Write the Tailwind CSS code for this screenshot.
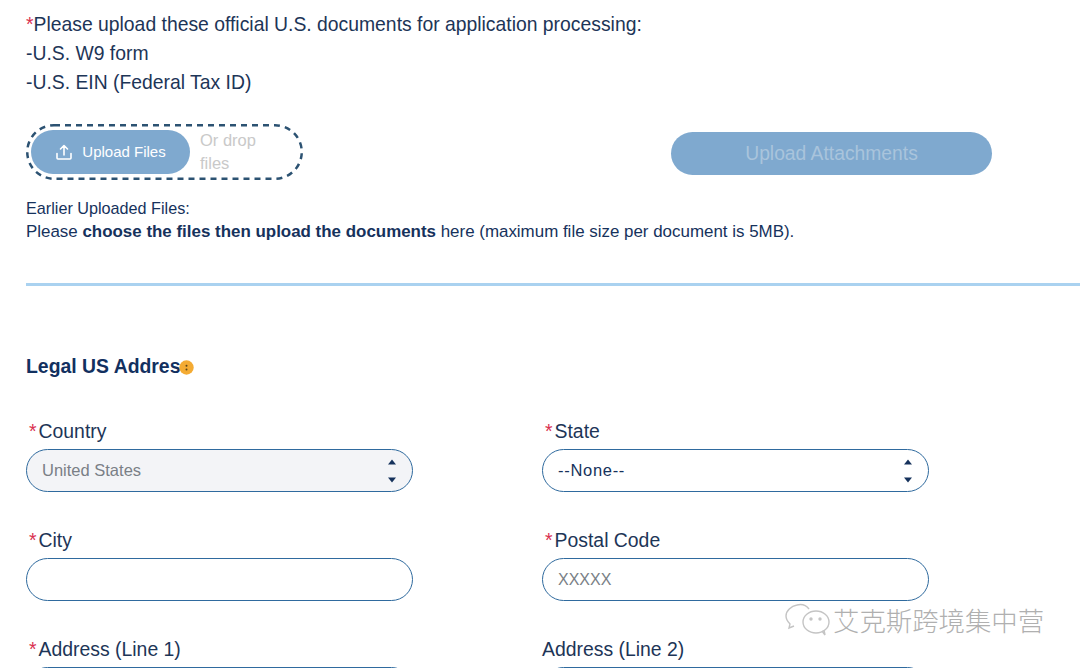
<!DOCTYPE html>
<html>
<head>
<meta charset="utf-8">
<script src="https://cdn.jsdelivr.net/npm/@tailwindcss/browser@4"></script>
</head>
<body class="bg-white">
<div class="relative h-[668px] w-[1080px] overflow-hidden bg-white font-['Liberation_Sans',Arial,sans-serif] text-[#16325c]">
  <div class="pl-[26px] pt-[10px]">
    <div class="text-[19.35px] leading-[29px] text-[#1d3557]">
      <p><span class="text-[#d9304f]">*</span>Please upload these official U.S. documents for application processing:</p>
      <p>-U.S. W9 form</p>
      <p>-U.S. EIN (Federal Tax ID)</p>
    </div>

    <div class="mt-[27px] flex h-[56px] w-[966px] items-center justify-between">
      <div class="relative flex h-[56px] w-[277px] shrink-0 items-center pl-[5px]">
        <svg class="absolute left-0 top-0" width="277" height="56" viewBox="0 0 277 56" fill="none"><rect x="1.250" y="1.250" width="274.500" height="53.500" rx="26.750" stroke="#2c5272" stroke-width="2.500" stroke-dasharray="6 5"/></svg>
        <div class="flex h-[44px] w-[159px] items-center justify-center gap-[9px] rounded-full bg-[#7fa9cf] text-[15px] text-white">
          <svg width="18" height="18" viewBox="0 0 18 18" fill="none" stroke="white" stroke-width="1.600" stroke-linecap="round" stroke-linejoin="round"><path d="M9 12V2.500M5.500 6 9 2.500 12.500 6M2 10.500V15a1 1 0 0 0 1 1h12a1 1 0 0 0 1-1v-4.500"/></svg>
          <span class="mt-[1px]">Upload Files</span>
        </div>
        <div class="ml-[10px] w-[70px] text-[16.5px] leading-[23px] text-[#c9c9c9]">Or drop files</div>
      </div>
      <div class="mt-[3px] flex h-[43px] w-[321px] items-center justify-center rounded-full bg-[#7fa9cf] pt-[1px] text-[19.3px] text-[#a9c4dc]">Upload Attachments</div>
    </div>

    <div class="mt-[16px] text-[16.2px] leading-[24px] text-[#16325c]">
      <p>Earlier Uploaded Files:</p>
      <p class="text-[16.93px] leading-[23px]">Please <b>choose the files then upload the documents</b> here (maximum file size per document is 5MB).</p>
    </div>
  </div>

  <div class="ml-[26px] mt-[40px] h-[3px] w-[1054px] bg-[#aad2f0]"></div>

  <div class="pl-[26px]">
    <h2 class="mt-[68px] flex h-[26px] items-center text-[19.4px] font-bold text-[#12305f]">Legal US Addres<svg class="ml-[-1px] shrink-0" width="15" height="15" viewBox="0 0 15 15"><circle cx="7.500" cy="7.500" r="7.200" fill="#f4ab33"/><circle cx="7.500" cy="5.800" r="1" fill="#5c4517"/><circle cx="7.500" cy="9.400" r="1" fill="#5c4517"/></svg></h2>

    <div class="mt-[40px] grid w-[903px] grid-cols-[387px_387px] gap-x-[129px] gap-y-[37px] text-[19.4px] text-[#1d3557]">
      <div>
        <div class="flex h-[24px] items-center pl-[3px]"><span class="mr-[2px] text-[#d9304f]">*</span>Country</div>
        <div class="mt-[5px] flex h-[43px] items-center justify-between rounded-[22px] border border-[#2f6a9e] bg-[#f3f4f7] pl-[15px] pr-[15px] text-[16.5px] text-[#7a7f86]">
          <span>United States</span>
          <svg width="10" height="26" viewBox="0 0 10 26" fill="#16325c"><path d="M5 1.500 9 6.500H1zM5 24.500 1 19.500H9z"/></svg>
        </div>
      </div>
      <div>
        <div class="flex h-[24px] items-center pl-[3px]"><span class="mr-[2px] text-[#d9304f]">*</span>State</div>
        <div class="mt-[5px] flex h-[43px] items-center justify-between rounded-[22px] border border-[#2f6a9e] bg-white pl-[15px] pr-[15px] text-[16.5px] tracking-[0.7px] text-[#16325c]">
          <span>--None--</span>
          <svg width="10" height="26" viewBox="0 0 10 26" fill="#16325c"><path d="M5 1.500 9 6.500H1zM5 24.500 1 19.500H9z"/></svg>
        </div>
      </div>
      <div>
        <div class="flex h-[24px] items-center pl-[3px]"><span class="mr-[2px] text-[#d9304f]">*</span>City</div>
        <div class="mt-[5px] h-[43px] rounded-[22px] border border-[#2f6a9e] bg-white"></div>
      </div>
      <div>
        <div class="flex h-[24px] items-center pl-[3px]"><span class="mr-[2px] text-[#d9304f]">*</span>Postal Code</div>
        <div class="mt-[5px] flex h-[43px] items-center rounded-[22px] border border-[#2f6a9e] bg-white pl-[15px] text-[16px] text-[#7a7f86]">XXXXX</div>
      </div>
      <div>
        <div class="flex h-[24px] items-center pl-[3px]"><span class="mr-[2px] text-[#d9304f]">*</span>Address (Line 1)</div>
        <div class="mt-[5px] h-[43px] rounded-[22px] border border-[#2f6a9e] bg-white"></div>
      </div>
      <div>
        <div class="flex h-[24px] items-center">Address (Line 2)</div>
        <div class="mt-[5px] h-[43px] rounded-[22px] border border-[#2f6a9e] bg-white"></div>
      </div>
    </div>
  </div>

  <div class="absolute left-[785px] top-[603px] flex items-center gap-[2px] font-['Noto_Sans_CJK_SC',sans-serif] text-[26.4px] font-light leading-[34px] text-[#b0b0b0]">
    <svg width="46" height="34" viewBox="0 0 46 34" fill="none" stroke="#c4c4c4" stroke-width="1.400"><path d="M24 6C21 2 16 1 12 2 6 3 1 8 1 13c0 3 2 6 4 8l-1 4 5-2"/><ellipse cx="31" cy="19" rx="13" ry="11"/><path d="M37 28l3 4-1-5"/><circle cx="26" cy="16" r="1" fill="#c4c4c4"/><circle cx="35" cy="16" r="1" fill="#c4c4c4"/></svg>
    <span>艾克斯跨境集中营</span>
  </div>
</div>
</body>
</html>
